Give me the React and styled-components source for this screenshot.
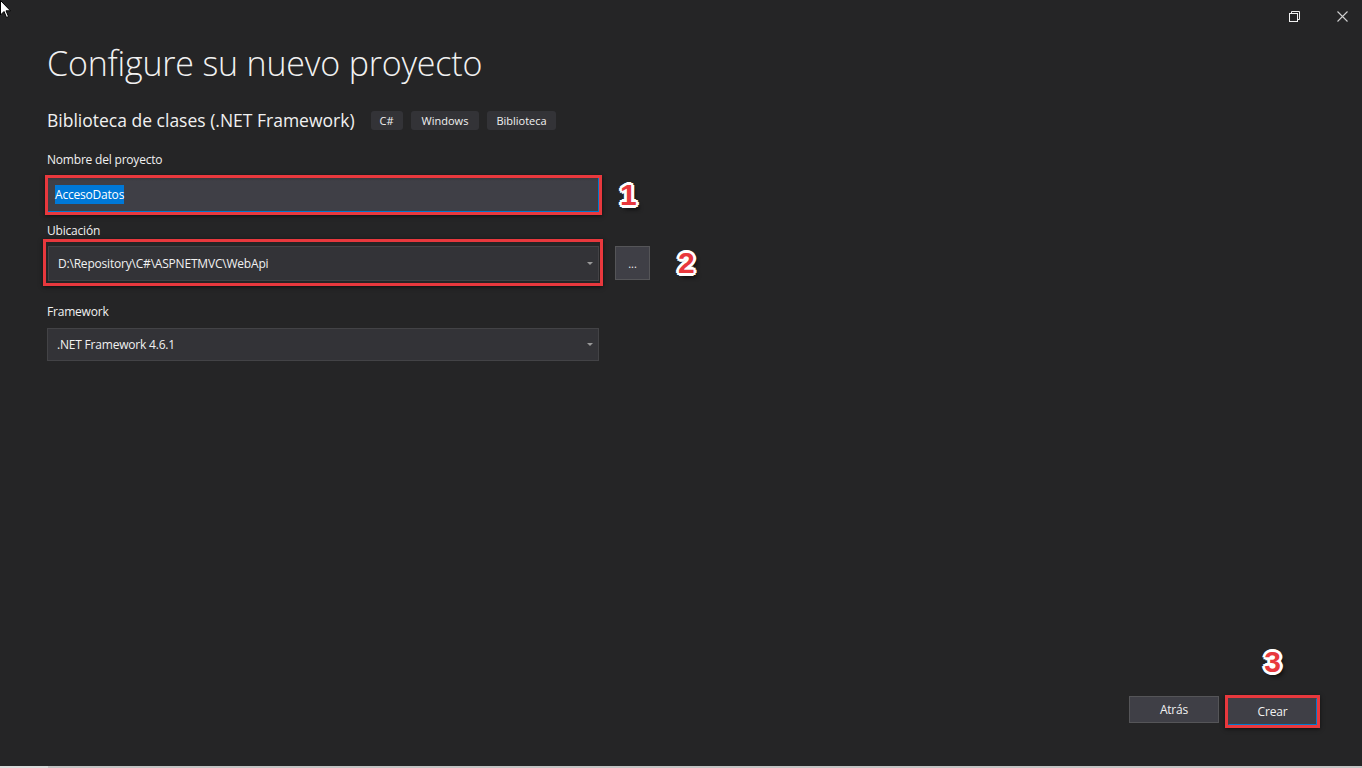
import React from "react";
import styled, { createGlobalStyle } from "styled-components";

const GlobalStyle = createGlobalStyle`
  html, body { margin: 0; padding: 0; background: #252526; }
  body { font-family: "Open Sans", "Noto Sans", sans-serif; }
  * { box-sizing: border-box; }
`;

const Window = styled.div`
  position: relative;
  width: 1362px;
  height: 768px;
  display: flex;
  flex-direction: column;
  background: #252526;
  color: #f1f1f1;
  overflow: hidden;
`;

const Cursor = styled.svg`
  position: absolute;
  left: 0;
  top: 0;
`;

const TitleBar = styled.div`
  height: 32px;
  display: flex;
  justify-content: flex-end;
  align-items: center;
  gap: 8px;
`;

const WinButton = styled.div`
  width: 40px;
  height: 32px;
  display: flex;
  align-items: center;
  justify-content: center;
`;

const Content = styled.main`
  flex: 1;
  display: flex;
  flex-direction: column;
  padding: 0 0 0 47px;
`;

const Title = styled.h1`
  margin: 9px 0 0;
  font-size: 34px;
  font-weight: 350;
  line-height: 44px;
  color: #f1f1f1;
  letter-spacing: -0.2px;
`;

const SubtitleRow = styled.div`
  margin-top: 23px;
  height: 24px;
  display: flex;
  align-items: center;
`;

const Subtitle = styled.h2`
  margin: 0 16px 0 0;
  font-size: 17.5px;
  font-weight: 400;
  line-height: 24px;
  color: #f1f1f1;
`;

const Tag = styled.span`
  height: 19px;
  padding: 0 ${(p) => p.$px || 9}px;
  margin-right: 8px;
  display: inline-flex;
  align-items: center;
  border-radius: 3px;
  background: #333337;
  font-size: 11px;
  color: #f1f1f1;
`;

const Label = styled.label`
  display: block;
  margin-top: ${(p) => p.$top}px;
  margin-bottom: ${(p) => p.$bottom}px;
  font-size: 12px;
  line-height: 16px;
  letter-spacing: -0.2px;
  color: #f1f1f1;
`;

const Row = styled.div`
  display: flex;
  align-items: center;
`;

const RedFrame = styled.div`
  width: ${(p) => p.$w}px;
  margin-left: ${(p) => p.$ml}px;
  padding: ${(p) => p.$pad};
  border: 3px solid #e8383d;
  box-shadow: 0 1px 4px rgba(0, 0, 0, 0.6);
`;

const TextInput = styled.div`
  height: 34px;
  display: flex;
  align-items: center;
  padding-left: 7px;
  background: linear-gradient(#38383e, #3f3f46 3px);
  border-right: 1px solid #007acc;
  border-bottom: 1px solid #007acc;
  font-size: 12px;
  letter-spacing: -0.2px;
`;

const Selected = styled.span`
  background: #0078d7;
  color: #ffffff;
  padding: 1px 0;
`;

const Dropdown = styled.div`
  width: ${(p) => p.$w || "100%"};
  height: ${(p) => p.$h}px;
  display: flex;
  align-items: center;
  justify-content: space-between;
  padding: 0 5px 0 9px;
  background: #333337;
  border: 1px solid #434346;
  font-size: 12px;
  letter-spacing: -0.2px;
  color: #f1f1f1;
`;

const Caret = styled.span`
  width: 0;
  height: 0;
  border-left: 3px solid transparent;
  border-right: 3px solid transparent;
  border-top: 3px solid #999999;
`;

const BrowseButton = styled.button`
  width: 35px;
  height: 34px;
  margin-left: 12px;
  padding: 2px 0 0;
  background: #3f3f46;
  border: 1px solid #555558;
  color: #f1f1f1;
  font-family: inherit;
  font-size: 11px;
  line-height: 1;
`;

const Annotation = styled.span`
  position: ${(p) => (p.$over ? "absolute" : "static")};
  left: 50%;
  bottom: calc(100% + 21px);
  transform: ${(p) => (p.$over ? "translateX(-50%)" : "none")};
  margin-left: ${(p) => p.$ml || 0}px;
  font-family: "Liberation Sans", Arial, sans-serif;
  font-weight: 700;
  font-size: 30px;
  line-height: 1;
  color: #e8383d;
  text-shadow:
    2px 0 0 #fff, -2px 0 0 #fff, 0 2px 0 #fff, 0 -2px 0 #fff,
    2px 2px 0 #fff, -2px -2px 0 #fff, 2px -2px 0 #fff, -2px 2px 0 #fff,
    3px 0 0 #fff, -3px 0 0 #fff, 0 3px 0 #fff, 0 -3px 0 #fff,
    3px 4px 4px rgba(0, 0, 0, 0.8);
`;

const Footer = styled.footer`
  display: flex;
  justify-content: flex-end;
  align-items: flex-start;
  gap: 6px;
  padding: 0 42px 38px 0;
`;

const Button = styled.button`
  width: ${(p) => p.$w}px;
  height: 27px;
  margin-top: ${(p) => p.$mt || 0}px;
  background: #3f3f46;
  border: 1px solid ${(p) => (p.$focus ? "#3f3f46" : "#555558")};
  border-right-color: ${(p) => (p.$focus ? "#007acc" : "#555558")};
  border-bottom-color: ${(p) => (p.$focus ? "#007acc" : "#555558")};
  color: #f1f1f1;
  font-family: inherit;
  font-size: 12px;
  letter-spacing: -0.2px;
  padding: 0;
`;

const ButtonFrame = styled.div`
  position: relative;
  border: 3px solid #e8383d;
  box-shadow: 0 1px 4px rgba(0, 0, 0, 0.6);
  display: flex;
`;

const BottomStrip = styled.div`
  height: 2px;
  background: linear-gradient(to right, #dcdcdc 48px, #c4c4c4 48px);
`;

export default function App() {
  return (
    <>
      <GlobalStyle />
      <Window>
        <Cursor width="12" height="20" viewBox="0 0 12 20">
          <path d="M0.5 0.5 L0.5 15 L4 11.5 L6.5 17.5 L8.5 16.5 L6 10.8 L10.5 10.8 Z" fill="#fff" stroke="#000" strokeWidth="1" />
        </Cursor>
        <TitleBar>
          <WinButton>
            <svg width="11" height="11" viewBox="0 0 11 11" fill="none" stroke="#f1f1f1" strokeWidth="1">
              <rect x="0.5" y="2.5" width="8" height="8" />
              <path d="M2.5 2.5 V0.5 H10.5 V8.5 H8.5" />
            </svg>
          </WinButton>
          <WinButton>
            <svg width="11" height="11" viewBox="0 0 11 11" fill="none" stroke="#cfcfcf" strokeWidth="1.1">
              <path d="M0.5 0.5 L10.5 10.5 M10.5 0.5 L0.5 10.5" />
            </svg>
          </WinButton>
        </TitleBar>
        <Content>
          <Title>Configure su nuevo proyecto</Title>
          <SubtitleRow>
            <Subtitle>Biblioteca de clases (.NET Framework)</Subtitle>
            <Tag>C#</Tag>
            <Tag $px={11}>Windows</Tag>
            <Tag>Biblioteca</Tag>
          </SubtitleRow>

          <Label $top={20} $bottom={7}>Nombre del proyecto</Label>
          <Row>
            <RedFrame $w={557} $ml={-2} $pad="0">
              <TextInput>
                <Selected>AccesoDatos</Selected>
              </TextInput>
            </RedFrame>
            <Annotation $ml={18}>1</Annotation>
          </Row>

          <Label $top={8} $bottom={0}>Ubicación</Label>
          <Row>
            <RedFrame $w={560} $ml={-4} $pad="4px 1px 2px 2px">
              <Dropdown $h={35}>
                D:\Repository\C#\ASPNETMVC\WebApi
                <Caret />
              </Dropdown>
            </RedFrame>
            <BrowseButton>...</BrowseButton>
            <Annotation $ml={28}>2</Annotation>
          </Row>

          <Label $top={18} $bottom={8}>Framework</Label>
          <Dropdown $w="552px" $h={33}>
            .NET Framework 4.6.1
            <Caret />
          </Dropdown>
        </Content>
        <Footer>
          <Button $w={90} $mt={1}>Atrás</Button>
          <ButtonFrame>
            <Button $w={89} $focus>Crear</Button>
            <Annotation $over>3</Annotation>
          </ButtonFrame>
        </Footer>
        <BottomStrip />
      </Window>
    </>
  );
}
